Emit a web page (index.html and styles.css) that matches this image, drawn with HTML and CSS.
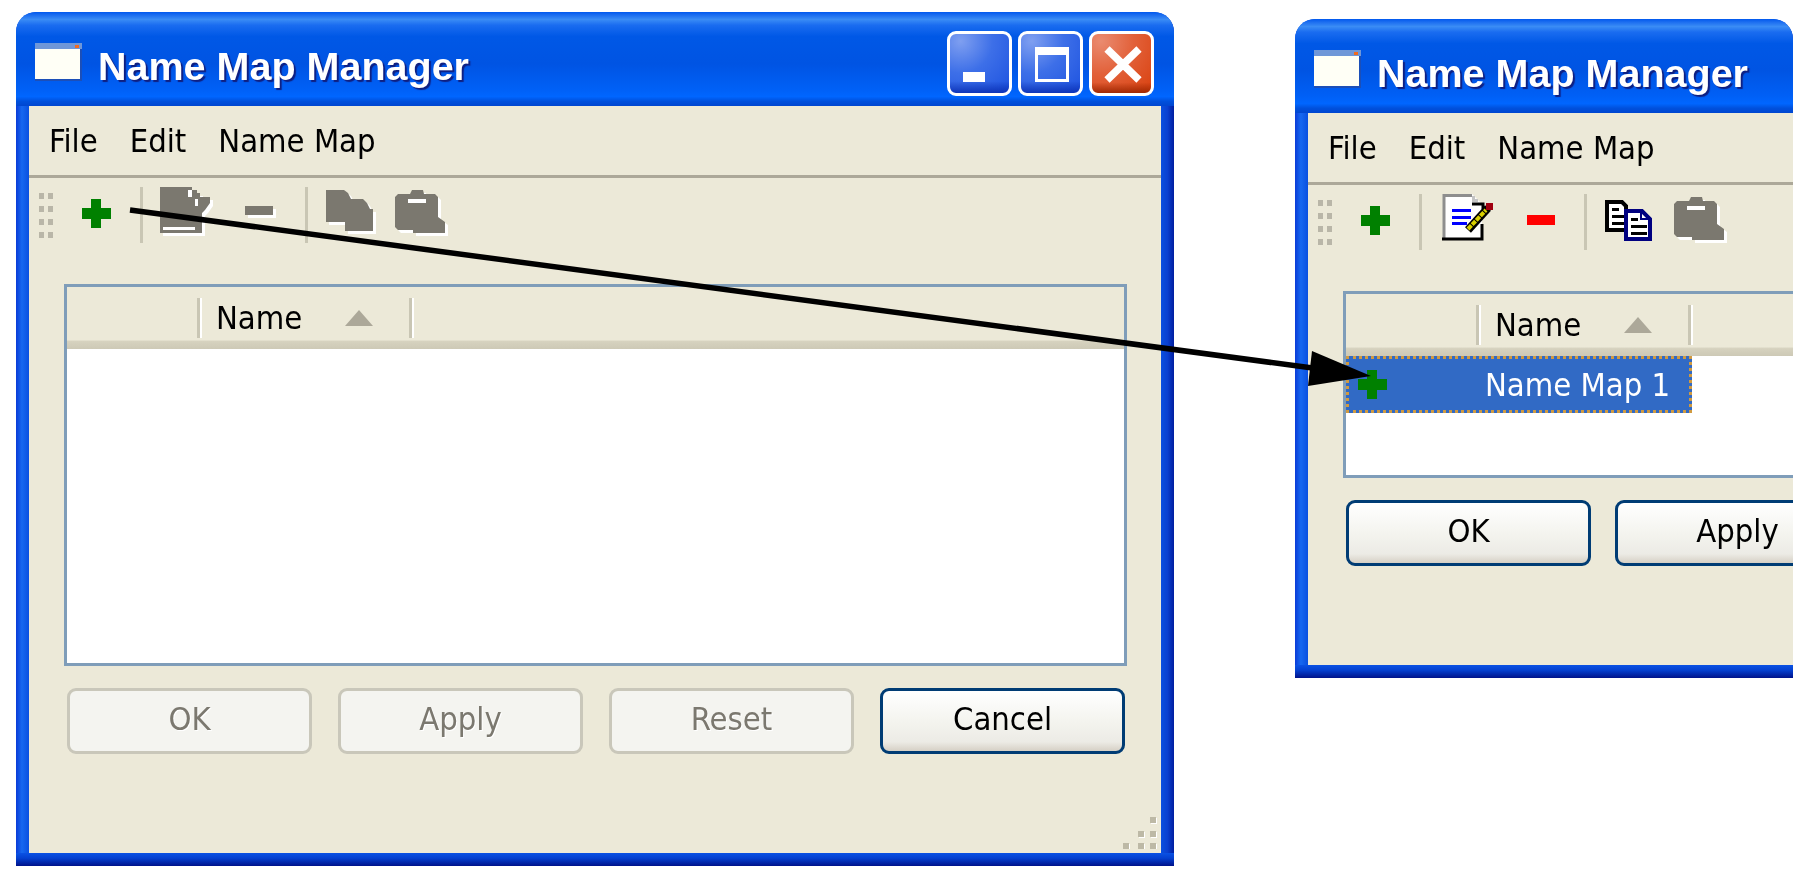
FILE: index.html
```html
<!DOCTYPE html>
<html lang="en">
<head>
  <meta charset="UTF-8" />
  <title>Name Map Manager</title>
  <link rel="stylesheet" href="styles.css">
</head>
<body>
  <div class="desktop">

    <!-- Before: empty list, most tools disabled -->
    <div class="window window-before">
      <div class="title-bar">
        <svg class="app-icon" width="47" height="38" viewBox="0 0 47 38">
          <rect x="0" y="0" width="47" height="38" fill="#1c4fb8" />
          <rect x="0" y="0" width="47" height="6" fill="#6f97d8" />
          <rect x="40" y="2" width="4" height="3" fill="#f06a20" />
          <rect x="0" y="6" width="45" height="30" fill="#fffff6" />
        </svg>
        <div class="title-text">Name Map Manager</div>
        <div class="title-buttons">
          <div class="title-btn">
            <svg width="60" height="60" viewBox="0 0 60 60"><rect x="13" y="38" width="22" height="10" fill="#fff" /></svg>
          </div>
          <div class="title-btn">
            <svg width="60" height="60" viewBox="0 0 60 60"><path d="M14 13h34v35h-34z M17 21v24h28v-24z" fill="#fff" fill-rule="evenodd" /></svg>
          </div>
          <div class="title-btn title-btn-close">
            <svg width="60" height="60" viewBox="0 0 60 60"><path d="M15 15L47 46M47 15L15 46" stroke="#fff" stroke-width="7.5" fill="none" /></svg>
          </div>
        </div>
      </div>
      <div class="client">
        <div class="menu-bar">
          <span class="menu-item">File</span>
          <span class="menu-item">Edit</span>
          <span class="menu-item">Name Map</span>
        </div>
        <div class="tool-bar">
          <svg class="tool tool-grip" width="16" height="56" viewBox="0 0 16 56">
            <path d="M1 6h5v6h-5z M10 6h5v6h-5z M1 19h5v6h-5z M10 19h5v6h-5z M1 32h5v6h-5z M10 32h5v6h-5z M1 45h5v6h-5z M10 45h5v6h-5z" fill="#b9b6a8" />
          </svg>
          <svg class="tool tool-plus" width="29" height="56" viewBox="0 0 29 56">
            <path d="M9 12h10v9h10v11h-10v9h-10v-9h-9v-11h9z" fill="#008000" />
          </svg>
          <div class="tool-sep"></div>
          <svg class="tool tool-edit" width="55" height="56" viewBox="0 0 55 56">
            <path transform="translate(3 3)" d="M0 0H32V3H37V6H40V10H50V16L45 23L42 26V46H0Z" fill="#fff" />
            <path d="M0 0H32V3H37V6H40V10H50V16L45 23L42 26V46H0Z" fill="#7b786f" />
            <path d="M28 3h4v7h-4z M35 12h3v7h-3z M3 40h32v3h-32z" fill="#fff" />
          </svg>
          <svg class="tool tool-minus" width="33" height="56" viewBox="0 0 33 56">
            <rect x="3" y="22" width="28" height="9" fill="#fff" />
            <rect x="0" y="19" width="28" height="9" fill="#7b786f" />
          </svg>
          <div class="tool-sep tool-sep-2"></div>
          <svg class="tool tool-copy" width="52" height="56" viewBox="0 0 52 56">
            <path transform="translate(3 3)" d="M0 3H18L22 6L25 12H37L41 16L44 22H47V44H19V35H0Z" fill="#fff" />
            <path d="M0 3H18L22 6L25 12H37L41 16L44 22H47V44H19V35H0Z" fill="#7b786f" />
          </svg>
          <svg class="tool tool-paste" width="56" height="56" viewBox="0 0 56 56">
            <path transform="translate(3 3)" d="M0 10L3 7H15L17 3H28L29 7H40L43 10V30L50 35V46H18V43H3L0 40Z" fill="#fff" />
            <path d="M0 10L3 7H15L17 3H28L29 7H40L43 10V30L50 35V46H18V43H3L0 40Z" fill="#7b786f" />
            <rect x="13" y="12" width="18" height="4" fill="#fff" />
          </svg>
        </div>
        <div class="list-view list-tall">
          <div class="list-header">
            <div class="col-spacer"></div>
            <div class="col-divider"></div>
            <div class="col-name">Name</div>
            <div class="sort-arrow"></div>
            <div class="col-divider"></div>
          </div>
        </div>
        <div class="button-row">
          <div class="btn btn-disabled">OK</div>
          <div class="btn btn-disabled">Apply</div>
          <div class="btn btn-disabled">Reset</div>
          <div class="btn">Cancel</div>
        </div>
        <svg class="size-grip" width="40" height="40" viewBox="0 0 40 40">
          <path d="M8 36h6v6h-6z M23 36h6v6h-6z M35 36h6v6h-6z M23 24h6v6h-6z M35 24h6v6h-6z M35 10h6v6h-6z" fill="#fff" transform="translate(-1 -1)" />
          <path d="M6 34h6v6h-6z M21 34h6v6h-6z M33 34h6v6h-6z M21 22h6v6h-6z M33 22h6v6h-6z M33 8h6v6h-6z" fill="#bdb9a6" />
        </svg>
      </div>
    </div>

    <!-- After: one name map added, cut off by the right edge -->
    <div class="window window-after">
      <div class="title-bar">
        <svg class="app-icon" width="47" height="38" viewBox="0 0 47 38">
          <rect x="0" y="0" width="47" height="38" fill="#1c4fb8" />
          <rect x="0" y="0" width="47" height="6" fill="#6f97d8" />
          <rect x="40" y="2" width="4" height="3" fill="#f06a20" />
          <rect x="0" y="6" width="45" height="30" fill="#fffff6" />
        </svg>
        <div class="title-text">Name Map Manager</div>
      </div>
      <div class="client">
        <div class="menu-bar">
          <span class="menu-item">File</span>
          <span class="menu-item">Edit</span>
          <span class="menu-item">Name Map</span>
        </div>
        <div class="tool-bar">
          <svg class="tool tool-grip" width="16" height="56" viewBox="0 0 16 56">
            <path d="M1 6h5v6h-5z M10 6h5v6h-5z M1 19h5v6h-5z M10 19h5v6h-5z M1 32h5v6h-5z M10 32h5v6h-5z M1 45h5v6h-5z M10 45h5v6h-5z" fill="#b9b6a8" />
          </svg>
          <svg class="tool tool-plus" width="29" height="56" viewBox="0 0 29 56">
            <path d="M9 12h10v9h10v11h-10v9h-10v-9h-9v-11h9z" fill="#008000" />
          </svg>
          <div class="tool-sep"></div>
          <svg class="tool tool-edit" width="55" height="56" viewBox="0 0 55 56">
            <path d="M4 0H33L43 10V46H4Z" fill="#fff" />
            <path d="M5 46V1.500H33" stroke="#8e8e8e" stroke-width="3" fill="none" />
            <path d="M33 2h3v3h3v3h-6z" fill="#c4c4c4" />
            <path d="M3 45H43V30" stroke="#000" stroke-width="3" fill="none" />
            <path d="M33 10H44V15" stroke="#000" stroke-width="3" fill="none" />
            <path d="M13 15h19v3h-19z M13 22h19v3h-19z M13 28h15v3h-15z" fill="#0000ff" />
            <path d="M29 36L49 14" stroke="#000" stroke-width="8" fill="none" />
            <path d="M29 35L47 16" stroke="#d8d000" stroke-width="4" stroke-dasharray="5 1" fill="none" />
            <rect x="47" y="9" width="7" height="7" fill="#a00010" />
          </svg>
          <svg class="tool tool-minus" width="33" height="56" viewBox="0 0 33 56">
            <rect x="3" y="21" width="28" height="10" fill="#ff0000" />
          </svg>
          <div class="tool-sep tool-sep-2"></div>
          <svg class="tool tool-copy" width="52" height="56" viewBox="0 0 52 56">
            <path d="M2 8H17L21 12V36H2Z" fill="#fff" stroke="#000" stroke-width="4" />
            <path d="M7 14h7v3h-7z M7 21h12v3h-12z M7 28h12v3h-12z" fill="#000" />
            <path d="M21 17H37L45 25V45H21Z" fill="#fff" stroke="#000080" stroke-width="4" />
            <path d="M36 17v8h9" stroke="#000080" stroke-width="2" fill="none" />
            <path d="M26 24h7v3h-7z M26 31h16v3h-16z M26 38h16v3h-16z" fill="#000" />
          </svg>
          <svg class="tool tool-paste" width="56" height="56" viewBox="0 0 56 56">
            <path transform="translate(3 3)" d="M0 10L3 7H15L17 3H28L29 7H40L43 10V30L50 35V46H18V43H3L0 40Z" fill="#fff" />
            <path d="M0 10L3 7H15L17 3H28L29 7H40L43 10V30L50 35V46H18V43H3L0 40Z" fill="#7b786f" />
            <rect x="13" y="12" width="18" height="4" fill="#fff" />
          </svg>
        </div>
        <div class="list-view list-short">
          <div class="list-header">
            <div class="col-spacer"></div>
            <div class="col-divider"></div>
            <div class="col-name">Name</div>
            <div class="sort-arrow"></div>
            <div class="col-divider"></div>
          </div>
          <div class="list-row">
            <svg class="row-icon" width="29" height="29" viewBox="0 0 29 29">
              <path d="M9 0h10v9h10v11h-10v9h-10v-9h-9v-11h9z" fill="#008000" />
            </svg>
            <span class="row-label">Name Map 1</span>
          </div>
        </div>
        <div class="button-row button-row-tight">
          <div class="btn">OK</div>
          <div class="btn">Apply</div>
        </div>
      </div>
    </div>

    <!-- Annotation arrow running across both windows -->
    <svg class="arrow" width="1805" height="886" viewBox="0 0 1805 886">
      <line x1="130" y1="210" x2="1320" y2="369" stroke="#000" stroke-width="5.500" />
      <polygon points="1371,376 1312,351 1308,386" fill="#000" />
    </svg>
  </div>
</body>
</html>
```

FILE: styles.css
```css
/* ---------------- Name Map Manager, two XP style windows ---------------- */
:root {
  --face: #ece9d8;
  --face-line: #aca899;
  --list-border: #7f9db9;
  --disabled-text: #7b786f;
  --ui-font: "DejaVu Sans Condensed", "DejaVu Sans", sans-serif;
}

* {
  margin: 0;
  padding: 0;
  box-sizing: border-box;
}

html, body {
  width: 100%;
  height: 100%;
  background-color: #fff;
  overflow: hidden;
}

body {
  font-family: var(--ui-font);
  font-stretch: condensed;
  font-size: 32.500px;
  color: #000;
}

.desktop {
  position: relative;
  width: 1805px;
  height: 886px;
  overflow: hidden;
  filter: blur(0.6px);
}

/* Window frame */
.window {
  position: absolute;
  display: flex;
  flex-direction: column;
  padding: 0 13px 13px;
  overflow: hidden;
  border-radius: 20px 20px 0 0;
  background-color: #0855dd;
  background-image:
    linear-gradient(180deg, #0a52e4 0, #0440d0 40%, #00128a 100%),
    linear-gradient(90deg, #0a3bd8 0, #1668f0 45%, #0a50e0 100%),
    linear-gradient(90deg, #0a50e0 0, #0a40d0 50%, #001ea0 100%);
  background-repeat: no-repeat;
  background-size: 100% 13px, 13px 100%, 13px 100%;
  background-position: left bottom, left top, right top;
}

.window-before {
  left: 16px;
  top: 12px;
  width: 1158px;
  height: 854px;
}

.window-after {
  left: 1295px;
  top: 19px;
  width: 498px;
  height: 659px;
  padding-right: 0;
}

.title-bar {
  display: flex;
  align-items: center;
  flex-shrink: 0;
  height: 94px;
  margin: 0 -13px;
  padding: 0 20px 0 19px;
  background: linear-gradient(180deg,
    #0058ee 0, #1a6cf0 3%, #3a8cf5 8%, #1a6cf0 14%, #0058e6 26%,
    #0054e3 55%, #0060f6 82%, #0066ff 90%, #0050dc 95%, #0046d0 100%);
}

.window-after .title-bar {
  margin-right: 0;
}

.app-icon {
  flex-shrink: 0;
  margin-top: 6px;
}

.title-text {
  flex: 1;
  margin-left: 16px;
  margin-top: 14px;
  font-family: "Liberation Sans", sans-serif;
  font-size: 39.500px;
  font-weight: 700;
  font-stretch: normal;
  color: #fff;
  white-space: nowrap;
  text-shadow: 2px 2px 1px #0f1f80;
}

.title-buttons {
  display: flex;
  gap: 6px;
  margin-top: 8px;
}

.title-btn {
  width: 65px;
  height: 65px;
  border: 3px solid #fff;
  border-radius: 9px;
  background:
    linear-gradient(180deg, transparent 80%, rgba(6, 40, 170, 0.75) 100%),
    radial-gradient(circle at 18% 12%, #7f9ff0 0, #3d6fe8 45%, #1d52e0 100%);
}

.title-btn-close {
  background:
    linear-gradient(180deg, transparent 82%, rgba(150, 35, 0, 0.85) 100%),
    radial-gradient(circle at 15% 12%, #ea8b70 0, #e2613a 45%, #d9400e 100%);
}

.title-btn svg {
  display: block;
}

/* Client area */
.client {
  position: relative;
  flex: 1;
  background-color: var(--face);
  overflow: hidden;
}

.menu-bar {
  display: flex;
  align-items: center;
  gap: 32px;
  height: 72px;
  padding-left: 20px;
  border-bottom: 3px solid var(--face-line);
}

.tool-bar {
  display: flex;
  align-items: flex-start;
  height: 106px;
  padding-top: 9px;
}

.tool {
  display: block;
  flex-shrink: 0;
}

.tool-grip { margin-left: 9px; }
.tool-plus { margin-left: 28px; }
.tool-edit { margin-left: 17px; }
.tool-minus { margin-left: 30px; }
.tool-copy { margin-left: 18px; }
.tool-paste { margin-left: 17px; }

.tool-sep {
  flex-shrink: 0;
  width: 3px;
  height: 56px;
  margin-left: 29px;
  background-color: #c9c6b4;
}

.tool-sep-2 {
  margin-left: 27px;
}

/* List view */
.list-view {
  width: 1063px;
  margin-left: 35px;
  border: 3px solid var(--list-border);
  background-color: #fff;
}

.list-tall { height: 382px; }
.list-short { height: 187px; }

.list-header {
  display: flex;
  align-items: center;
  height: 62px;
  background: linear-gradient(180deg, var(--face) 0, var(--face) 85%, #d6d2bf 88%, #cdc9b6 100%);
}

.col-spacer {
  width: 130px;
}

.col-divider {
  width: 5px;
  height: 40px;
  border-left: 3px solid #c9c6b4;
  border-right: 2px solid #fff;
}

.col-name {
  width: 143px;
  padding-left: 14px;
}

.sort-arrow {
  width: 28px;
  height: 16px;
  margin-right: 36px;
  background-color: #aca899;
  clip-path: polygon(50% 0, 100% 100%, 0 100%);
}

.list-row {
  display: flex;
  align-items: center;
  position: relative;
  width: 346px;
  height: 57px;
  padding-left: 12px;
  background-color: #316ac5;
  outline: 3px dotted #d09a40;
  outline-offset: -3px;
  color: #fff;
}

.row-icon {
  flex-shrink: 0;
}

.row-label {
  margin-left: 98px;
  white-space: nowrap;
}

/* Buttons */
.button-row {
  display: flex;
  gap: 26px;
  margin: 22px 0 0 38px;
}

.button-row-tight {
  gap: 24px;
}

.btn {
  flex-shrink: 0;
  width: 245px;
  height: 66px;
  line-height: 56px;
  text-align: center;
  border: 3px solid #003c74;
  border-radius: 9px;
  background: linear-gradient(180deg, #fff 0, #f4f4ef 50%, #ecebe5 85%, #d6d0c5 100%);
}

.btn-disabled {
  border-color: #c9c7ba;
  background: #f4f4f0;
  color: var(--disabled-text);
  text-shadow: 1px 1px 0 #fff;
}

.size-grip {
  position: absolute;
  right: 4px;
  bottom: 4px;
}

/* Annotation */
.arrow {
  position: absolute;
  left: 0;
  top: 0;
  pointer-events: none;
}
```
